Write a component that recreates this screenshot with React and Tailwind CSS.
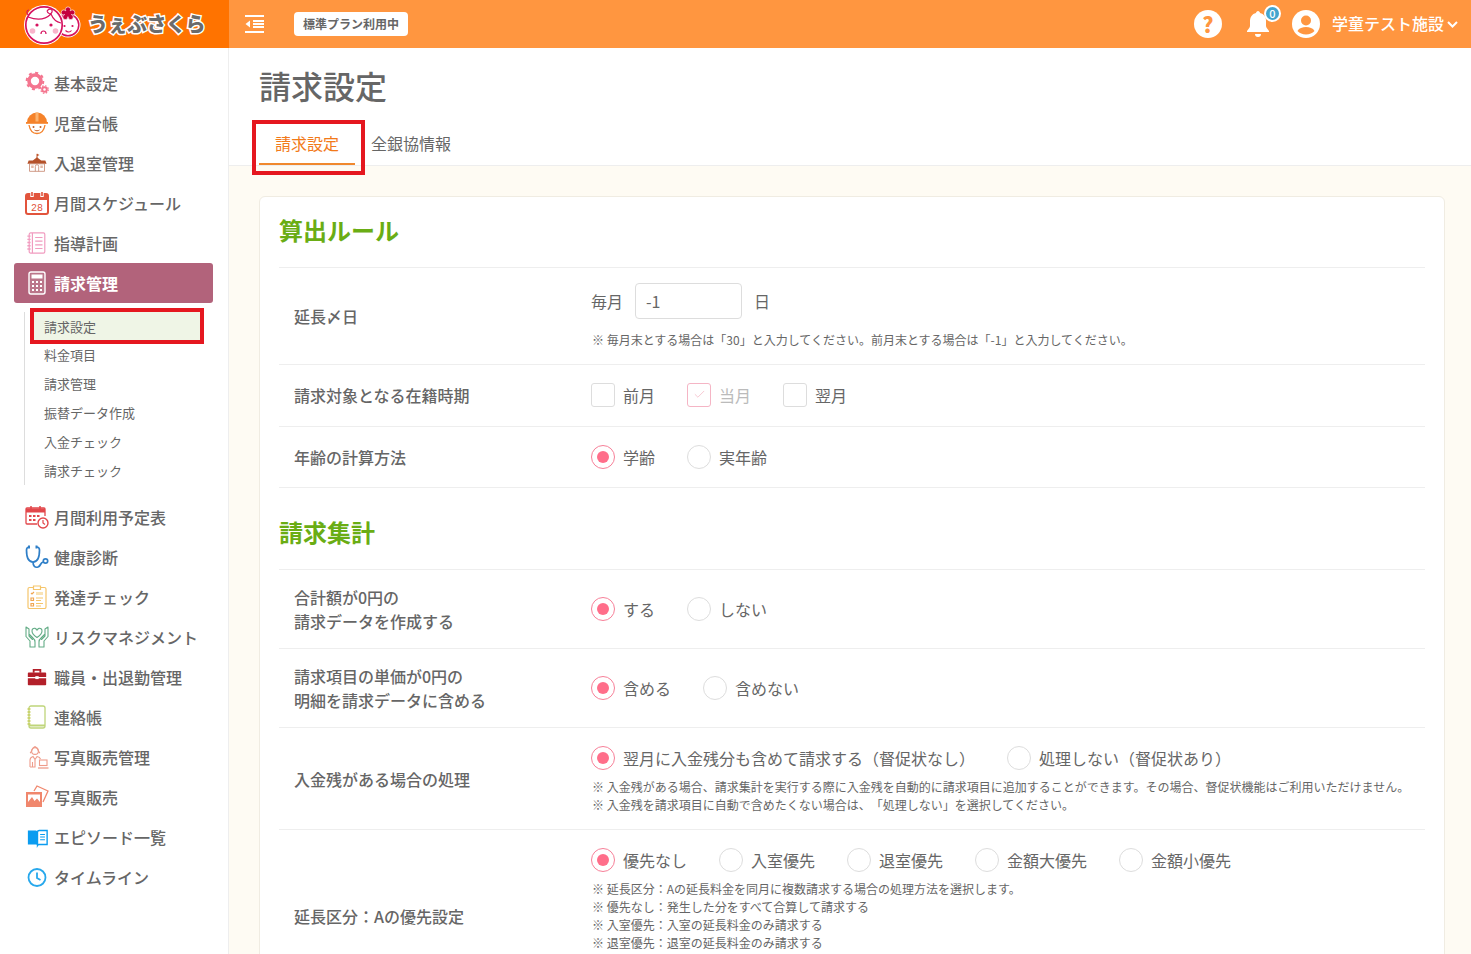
import { Check } from 'lucide-react'

const Logo = () => (
  <svg width="62" height="48" viewBox="0 0 62 48" fill="none">
    <circle cx="48" cy="25" r="12.500" fill="#fff" />
    <circle cx="48" cy="25" r="10.800" fill="#fff" stroke="#D6125F" strokeWidth="1.500" />
    <circle cx="24" cy="25" r="20" fill="#fff" />
    <circle cx="24" cy="25" r="18.200" fill="#fff" stroke="#D6125F" strokeWidth="1.700" />
    <path d="M8 17c8 3 17 3 23-3 2 5 5 8 10 9M8 15c-2-3-1-5 1-5M27 11c2-3 6-2 5 1s-4 2-5-1" stroke="#D6125F" strokeWidth="1.200" />
    <circle cx="17" cy="25" r="1.600" fill="#D6125F" />
    <circle cx="31" cy="25" r="1.600" fill="#D6125F" />
    <circle cx="12.500" cy="31" r="2.800" fill="#F8B4CB" />
    <circle cx="35.500" cy="31" r="2.800" fill="#F8B4CB" />
    <path d="M21 34c0-4 5-4 5 0" stroke="#D6125F" strokeWidth="1.200" />
    <circle cx="44.500" cy="26" r="1.100" fill="#D6125F" />
    <circle cx="52.500" cy="26" r="1.100" fill="#D6125F" />
    <path d="M45.500 30.500c2 2 4.500 2 6 0" stroke="#D6125F" strokeWidth="1.100" />
    <g fill="#C4003E" stroke="#fff" strokeWidth="0.600">
      <circle cx="48" cy="9.500" r="2.600" />
      <circle cx="43.800" cy="12.500" r="2.600" />
      <circle cx="52.200" cy="12.500" r="2.600" />
      <circle cx="45.300" cy="17" r="2.600" />
      <circle cx="50.700" cy="17" r="2.600" />
    </g>
    <circle cx="48" cy="13.500" r="3.200" fill="#C4003E" />
  </svg>
)

const Gears = () => (
  <svg width="24" height="24" viewBox="0 0 24 24" fill="none" stroke="#F4758F">
    <circle cx="10" cy="10" r="6" strokeWidth="3.600" />
    <circle cx="10" cy="10" r="8.300" strokeWidth="2" strokeDasharray="3 3.500" />
    <circle cx="19.500" cy="18.500" r="2.300" strokeWidth="2" />
    <circle cx="19.500" cy="18.500" r="3.800" strokeWidth="1.200" strokeDasharray="1.500 1.500" />
  </svg>
)

const KidHat = () => (
  <svg width="24" height="24" viewBox="0 0 24 24" fill="none">
    <path d="M2 11.500a10 10 0 0 1 20 0z" fill="#F5822A" />
    <path d="M10.500 1.500h3v9h-3z" fill="#FBB36F" />
    <path d="M1 11h22v1.800H1z" fill="#F5822A" />
    <path d="M4 14c1 6 4 8.500 8 8.500s7-2.500 8-8.500" stroke="#F5822A" strokeWidth="1.300" />
    <circle cx="8.500" cy="16" r="1" fill="#C0602A" />
    <circle cx="15.500" cy="16" r="1" fill="#C0602A" />
    <path d="M9.500 19c1.500 1 3.500 1 5 0" stroke="#C0602A" />
  </svg>
)

const School = () => (
  <svg width="20" height="20" viewBox="0 0 24 24" fill="none">
    <path d="M12 1v5" stroke="#C0562D" strokeWidth="1.200" />
    <path d="M12 1l3 1.500-3 1.500z" fill="#C0562D" />
    <path d="M12 5l5 4h5l1.500 4H.5L2 9h5z" fill="#B5522A" />
    <path d="M3 13h18v9H3z" stroke="#C88A74" strokeWidth="1" />
    <path d="M10 22v-6a2 2 0 0 1 4 0v6" stroke="#C88A74" />
    <path d="M5 15h3v3H5zM16 15h3v3h-3z" fill="#E3B9A6" />
  </svg>
)

const Calendar28 = () => (
  <svg width="24" height="24" viewBox="0 0 24 24" fill="none">
    <rect x="1" y="3" width="22" height="20" rx="2" stroke="#E2543C" strokeWidth="2" />
    <path d="M1 4h22v5H1z" fill="#E2543C" />
    <path d="M7 1v5M17 1v5" stroke="#fff" strokeWidth="3.400" />
    <path d="M7 1v4M17 1v4" stroke="#E2543C" strokeWidth="1.600" />
    <text x="12" y="20" textAnchor="middle" fontSize="10" fill="#E2543C" fontFamily="'Liberation Mono',monospace">28</text>
  </svg>
)

const Notebook = ({ color }) => (
  <svg width="22" height="22" viewBox="0 0 24 24" fill="none" stroke={color} strokeWidth="1.300">
    <rect x="3.500" y="1" width="17" height="22" rx="1.500" />
    <path d="M7 1v22" />
    <path d="M1.500 4.500h3.500M1.500 8h3.500M1.500 11.500h3.500M1.500 15h3.500M1.500 18.500h3.500" strokeWidth="1.500" />
    <path d="M10 6h8M10 10h8M10 14h8M10 18h8" />
  </svg>
)

const Calculator = () => (
  <svg width="24" height="24" viewBox="0 0 24 24" fill="none" stroke="#fff">
    <rect x="4" y="1" width="16" height="22" rx="2" strokeWidth="1.400" fill="#F2E2E7" fillOpacity="0.15" />
    <path d="M6.500 3.500h11v4h-11z" fill="#fff" stroke="none" />
    <path d="M7 11h2M11 11h2M15 11h2M7 15h2M11 15h2M15 15h2M7 19h2M11 19h2M15 19h2" strokeWidth="2" />
  </svg>
)

const CalendarClock = () => (
  <svg width="24" height="24" viewBox="0 0 24 24" fill="none">
    <path d="M12 19H2a1 1 0 0 1-1-1V4a1 1 0 0 1 1-1h17a1 1 0 0 1 1 1v7" stroke="#E2474B" strokeWidth="1.300" />
    <path d="M1 3.500h19v4H1z" fill="#E2474B" />
    <path d="M6 1v4M15 1v4" stroke="#E2474B" strokeWidth="1.500" />
    <path d="M4 10h2.500v2H4zM8 10h2.500v2H8zM12 10h2.500v2H12zM4 14h2.500v2H4zM8 14h2.500v2H8z" fill="#E2474B" />
    <circle cx="18" cy="18" r="5" fill="#fff" stroke="#E2474B" strokeWidth="1.400" />
    <path d="M18 15v3l2 1.500" stroke="#E2474B" strokeWidth="1.200" />
  </svg>
)

const Stethoscope = () => (
  <svg width="24" height="24" viewBox="0 0 24 24" fill="none" stroke="#2F7FC8" strokeWidth="1.700">
    <path d="M4.500 2C2.500 2 1.500 3 1.500 5c0 6 1.500 12 6.500 12s6.500-6 6.500-12c0-2-1-3-3-3" />
    <path d="M4 .5v3M11.500.5v3" strokeWidth="2" />
    <path d="M8 17c0 4 2 6 5 5s2-4 5-5" />
    <circle cx="20.500" cy="16" r="2.200" />
  </svg>
)

const Clipboard = () => (
  <svg width="24" height="24" viewBox="0 0 24 24" fill="none" stroke="#F5C56B" strokeWidth="1.200">
    <rect x="3" y="2.500" width="18" height="21" rx="1.500" />
    <path d="M8.500 1h7v3.500h-7z" fill="#fff" />
    <path d="M6 8l1 1 2-2M6 13h2.500v2.500H6zM6 18.500h2.500V21H6z" stroke="#F0A650" />
    <path d="M11 7h7v3h-7z" fill="#F9E3B5" stroke="none" />
    <path d="M11 13h7M11 15.500h5M11 18.500h7M11 21h5" />
  </svg>
)

const HandsHeart = () => (
  <svg width="24" height="24" viewBox="0 0 24 24" fill="none" stroke="#63AC86" strokeWidth="1.100" strokeLinejoin="round" strokeLinecap="round">
    <path d="M12 12.500C9 10.500 7 8.500 7 6c0-2 1.500-3 3-2.600 1 .3 1.600 1 2 1.800.4-.8 1-1.500 2-1.800 1.500-.4 3 .6 3 2.600 0 2.500-2 4.500-5 6.500z" />
    <path d="M1 2l3 2v7l3.500 3.500M1 2v9.500l4 4.500v6h5v-5c0-2-.8-3-2-4l-3.500-3.500" />
    <path d="M23 2l-3 2v7l-3.500 3.500M23 2v9.500L19 16v6h-5v-5c0-2 .8-3 2-4l3.500-3.500" />
  </svg>
)

const Briefcase = () => (
  <svg width="20" height="20" viewBox="0 0 24 24" fill="none">
    <path d="M8 7V3.500h8V7" stroke="#B3202A" strokeWidth="2.200" />
    <path d="M2 6.500h20a1 1 0 0 1 1 1V12H1V7.500a1 1 0 0 1 1-1z" fill="#B3202A" />
    <path d="M1 13.500h22V21a1 1 0 0 1-1 1H2a1 1 0 0 1-1-1z" fill="#B3202A" />
    <rect x="10" y="11" width="4" height="3.500" fill="#fff" />
  </svg>
)

const GreenNote = () => (
  <svg width="24" height="24" viewBox="0 0 24 24" fill="none" stroke="#BFD57A" strokeWidth="1.300">
    <rect x="4" y="1" width="16" height="22" rx="2" />
    <path d="M4 20.500h16" strokeWidth="2" />
    <path d="M2.500 4h3M2.500 7h3M2.500 10h3M2.500 13h3M2.500 16h3M2.500 19h3" stroke="#C6CE5C" strokeWidth="1.500" />
  </svg>
)

const PersonLaptop = () => (
  <svg width="24" height="24" viewBox="0 0 24 24" fill="none" stroke="#EE9C8B" strokeWidth="1.100">
    <circle cx="10" cy="6" r="3.400" />
    <path d="M5 8c2-1 2-6 5-6.500 3 .5 3 5.500 5 6.500" />
    <path d="M5 22v-7c0-2 1.500-3 3-3.500l2 3 2-3c1.500.3 3 1 3.500 2.500" />
    <path d="M10 15v7H5M7.500 22v-5" />
    <rect x="14.500" y="15" width="7.500" height="5.500" />
    <path d="M13 23h10.500" strokeWidth="1.300" />
  </svg>
)

const Photos = () => (
  <svg width="24" height="24" viewBox="0 0 24 24" fill="none">
    <path d="M9 6l3-5 11 5-5 11" stroke="#F0876D" strokeWidth="1.300" />
    <path d="M1 7h16v15H1z" fill="#F0876D" />
    <path d="M3 9.500h12V17l-3-3.500-2.500 2.500L7 12l-4 5z" fill="#fff" />
  </svg>
)

const Book = () => (
  <svg width="21" height="21" viewBox="0 0 24 24" fill="none">
    <path d="M1 4h9a2 2 0 0 1 2 2v15a2 2 0 0 0-2-1H1z" fill="#0B9CF0" />
    <path d="M23 4h-9a2 2 0 0 0-2 2v15a2 2 0 0 1 2-1h9z" fill="#fff" stroke="#0B9CF0" strokeWidth="1.600" />
    <path d="M15 8.500h5.500M15 11.500h5.500M15 14.500h5.500" stroke="#0B9CF0" strokeWidth="1.200" />
  </svg>
)

const ClockIcon = () => (
  <svg width="24" height="24" viewBox="0 0 24 24" fill="none" stroke="#27A8EC" strokeWidth="1.800">
    <circle cx="12" cy="12.500" r="8.500" />
    <path d="M12 7.500v5.500l3.500 2" />
  </svg>
)

const topMenu = [
  ['基本設定', <Gears />],
  ['児童台帳', <KidHat />],
  ['入退室管理', <School />],
  ['月間スケジュール', <Calendar28 />],
  ['指導計画', <Notebook color="#F19CC0" />],
]

const bottomMenu = [
  ['月間利用予定表', <CalendarClock />],
  ['健康診断', <Stethoscope />],
  ['発達チェック', <Clipboard />],
  ['リスクマネジメント', <HandsHeart />],
  ['職員・出退勤管理', <Briefcase />],
  ['連絡帳', <GreenNote />],
  ['写真販売管理', <PersonLaptop />],
  ['写真販売', <Photos />],
  ['エピソード一覧', <Book />],
  ['タイムライン', <ClockIcon />],
]

const subMenu = ['料金項目', '請求管理', '振替データ作成', '入金チェック', '請求チェック']

function MenuItem({ label, icon }) {
  return (
    <div className="flex h-10 items-center gap-[5px] pl-[11px] text-base font-medium text-[#666]">
      <span className="flex h-6 w-6 shrink-0 items-center justify-center">{icon}</span>
      <span>{label}</span>
    </div>
  )
}

function Sidebar() {
  return (
    <aside className="w-[229px] shrink-0 border-r border-[#eee] bg-white pt-[15px] pr-[15px] pl-[14px]">
      {topMenu.map(([label, icon]) => (
        <MenuItem key={label} label={label} icon={icon} />
      ))}
      <div className="flex h-10 items-center gap-[5px] rounded-[3px] bg-[#B2637B] pl-[11px] text-base font-bold text-white">
        <span className="flex h-6 w-6 items-center justify-center"><Calculator /></span>
        <span>請求管理</span>
      </div>
      <div className="mt-[9px] mb-[12px] ml-[10px] border-l border-[#ddd] pl-[19px] text-[13px] text-[#666]">
        <div className="relative mr-[13px] -ml-[10px] flex h-[28px] items-center bg-[#EFF5E6] pt-[2px] pl-[10px]">
          請求設定
          <div className="absolute -inset-x-[4px] -inset-y-[4px] border-4 border-[#E5171F]" />
        </div>
        {subMenu.map(label => (
          <div key={label} className="flex h-[29px] items-center">{label}</div>
        ))}
      </div>
      {bottomMenu.map(([label, icon]) => (
        <MenuItem key={label} label={label} icon={icon} />
      ))}
    </aside>
  )
}

function Radio({ label, checked }) {
  return (
    <label className="mr-8 flex items-center gap-2">
      <span className={`flex h-6 w-6 shrink-0 items-center justify-center rounded-full border ${checked ? 'border-[#F77F98]' : 'border-[#ddd]'}`}>
        {checked && <span className="h-3 w-3 rounded-full bg-[#FF6E8A]" />}
      </span>
      <span>{label}</span>
    </label>
  )
}

function Checkbox({ label, checked }) {
  return (
    <label className={`mr-8 flex items-center gap-2 ${checked ? 'text-[#bbb]' : ''}`}>
      <span className={`flex h-6 w-6 items-center justify-center rounded-[3px] border ${checked ? 'border-[#F5B5C5]' : 'border-[#ddd]'}`}>
        {checked && <Check size={13} strokeWidth={1} color="#F09AAE" />}
      </span>
      <span>{label}</span>
    </label>
  )
}

function Row({ label, height, contentClass = '', children, last }) {
  return (
    <div className={`flex items-center ${height} ${last ? '' : 'border-b border-[#eee]'}`}>
      <div className="w-[312px] shrink-0 pl-[15px] text-base leading-6 font-medium whitespace-pre-line">{label}</div>
      <div className={`flex-1 ${contentClass}`}>{children}</div>
    </div>
  )
}

function Notes({ lines, gap = 'mt-[7px]' }) {
  return (
    <div className={`pl-[1px] text-xs leading-[18px] ${gap}`}>
      {lines.map(line => <p key={line}>{line}</p>)}
    </div>
  )
}

function SectionTitle({ children, height }) {
  return (
    <h2 className={`flex items-center border-b border-[#eee] text-2xl font-bold text-[#6AAD14] ${height}`}>{children}</h2>
  )
}

export default function App() {
  return (
    <div className="flex h-screen flex-col overflow-hidden bg-white font-['Noto_Sans_CJK_JP','Noto_Sans',sans-serif] text-[#666] [text-spacing-trim:space-all]">
      <header className="flex h-12 shrink-0 items-center bg-[#FF9640] text-white">
        <div className="flex h-12 w-[229px] shrink-0 items-center gap-[6px] bg-[#FF7300] pl-[20px]">
          <Logo />
          <span className="-mt-[1px] text-[20px] font-black tracking-[-0.5px] text-[#6b6b6b] [paint-order:stroke] [-webkit-text-stroke:3px_white]">うぇぶさくら</span>
        </div>
        <svg className="ml-4" width="19" height="18" viewBox="0 0 19 18" fill="#fff">
          <path d="M0 0h19v2H0zM0 16h19v2H0zM8 5h11v2H8zM8 8h11v2H8zM8 11h11v2H8zM5 5.500v7L.5 9z" />
        </svg>
        <span className="ml-[30px] rounded-[4px] bg-white px-[9px] py-[3px] text-xs leading-[18px] font-bold text-[#666]">標準プラン利用中</span>
        <div className="ml-auto flex items-center pr-[13px]">
          <span className="flex h-7 w-7 items-center justify-center rounded-full bg-white text-[21px] leading-none font-black text-[#FF9640]">?</span>
          <span className="relative ml-[22px] flex h-7 w-7 items-center justify-center">
            <svg width="24" height="26" viewBox="0 0 24 26" fill="#fff">
              <path d="M12 0c1 0 2 1 2 2 4 1 6 4 6 8v5c0 2 2 3 3 5v1H1v-1c1-2 3-3 3-5v-5c0-4 2-7 6-8 0-1 1-2 2-2zM9 23h6a3 3 0 0 1-6 0z" />
            </svg>
            <span className="absolute -top-[5px] -right-[9px] flex h-[17px] w-[17px] items-center justify-center rounded-full border-2 border-white bg-[#43A5CE] text-[11px] leading-none font-medium text-white">0</span>
          </span>
          <svg className="ml-[20px]" width="28" height="28" viewBox="0 0 28 28">
            <circle cx="14" cy="14" r="14" fill="#fff" />
            <circle cx="14" cy="10.500" r="5" fill="#FF9640" />
            <path d="M5.500 21c1.500-3 5-4 8.500-4s7 1 8.500 4c-2 2.300-5 3.500-8.500 3.500S7.500 23.300 5.500 21z" fill="#FF9640" />
          </svg>
          <span className="-mt-[2px] ml-[12px] text-base font-medium">学童テスト施設</span>
          <svg className="ml-[3px]" width="11" height="7" viewBox="0 0 11 7" fill="none" stroke="#fff" strokeWidth="2">
            <path d="M1 1l4.500 4.500L10 1" />
          </svg>
        </div>
      </header>

      <div className="flex min-h-0 flex-1">
        <Sidebar />
        <main className="min-w-0 flex-1 overflow-hidden">
          <div className="h-[118px] border-b border-[#eee] bg-white pl-[30px]">
            <h1 className="pt-[14px] text-[32px] leading-[46px] font-medium">請求設定</h1>
            <div className="mt-[13px] flex text-base">
              <div className="relative flex h-[44px] w-[96px] items-center justify-center border-b-2 border-[#F0882E] pt-[1px] text-[#F27A1A]">
                請求設定
                <div className="absolute -top-[1px] -right-[10px] -bottom-[12px] -left-[7px] border-4 border-[#E5171F]" />
              </div>
              <div className="flex h-[44px] items-center pl-[16px]">全銀協情報</div>
            </div>
          </div>

          <div className="bg-[#FEFBF3] pt-[30px] pr-[26px] pl-[30px]">
            <section className="rounded-[6px] border border-[#f0ece2] bg-white px-[19px]">
              <SectionTitle height="h-[71px] pb-[4px]">算出ルール</SectionTitle>
              <Row label="延長〆日" height="h-[97px]" contentClass="self-start pt-[15px]">
                <div className="flex items-center">
                  <span>毎月</span>
                  <span className="mx-3 flex h-9 w-[107px] items-center rounded-[4px] border border-[#ddd] pl-[10px]">-1</span>
                  <span>日</span>
                </div>
                <Notes gap="mt-[12px]" lines={['※ 毎月末とする場合は「30」と入力してください。前月末とする場合は「-1」と入力してください。']} />
              </Row>
              <Row label="請求対象となる在籍時期" height="h-[62px] pb-[2px]">
                <div className="flex">
                  <Checkbox label="前月" />
                  <Checkbox label="当月" checked />
                  <Checkbox label="翌月" />
                </div>
              </Row>
              <Row label="年齢の計算方法" height="h-[61px]">
                <div className="flex">
                  <Radio label="学齢" checked />
                  <Radio label="実年齢" />
                </div>
              </Row>
              <SectionTitle height="h-[82px] pt-[6px]">請求集計</SectionTitle>
              <Row label={'合計額が0円の\n請求データを作成する'} height="h-[79px]">
                <div className="flex">
                  <Radio label="する" checked />
                  <Radio label="しない" />
                </div>
              </Row>
              <Row label={'請求項目の単価が0円の\n明細を請求データに含める'} height="h-[79px]">
                <div className="flex">
                  <Radio label="含める" checked />
                  <Radio label="含めない" />
                </div>
              </Row>
              <Row label="入金残がある場合の処理" height="h-[102px]" contentClass="self-start pt-[18px]">
                <div className="flex">
                  <Radio label="翌月に入金残分も含めて請求する（督促状なし）" checked />
                  <Radio label="処理しない（督促状あり）" />
                </div>
                <Notes gap="mt-[8px]" lines={[
                  '※ 入金残がある場合、請求集計を実行する際に入金残を自動的に請求項目に追加することができます。その場合、督促状機能はご利用いただけません。',
                  '※ 入金残を請求項目に自動で含めたくない場合は、「処理しない」を選択してください。',
                ]} />
              </Row>
              <Row label="延長区分：Aの優先設定" height="h-[172px]" contentClass="self-start pt-[18px]" last>
                <div className="flex">
                  <Radio label="優先なし" checked />
                  <Radio label="入室優先" />
                  <Radio label="退室優先" />
                  <Radio label="金額大優先" />
                  <Radio label="金額小優先" />
                </div>
                <Notes gap="mt-[8px]" lines={[
                  '※ 延長区分：Aの延長料金を同月に複数請求する場合の処理方法を選択します。',
                  '※ 優先なし：発生した分をすべて合算して請求する',
                  '※ 入室優先：入室の延長料金のみ請求する',
                  '※ 退室優先：退室の延長料金のみ請求する',
                ]} />
              </Row>
            </section>
          </div>
        </main>
      </div>
    </div>
  )
}
